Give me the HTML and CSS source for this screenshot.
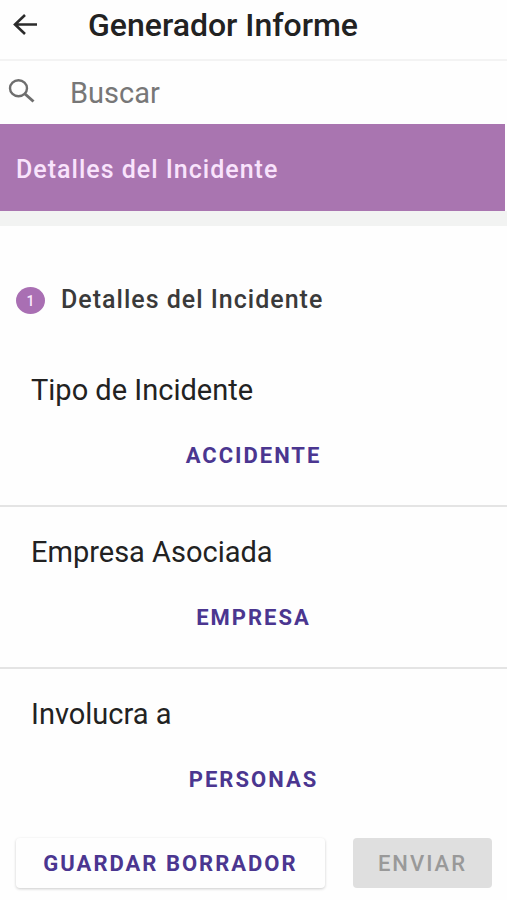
FILE: index.html
```html
<!DOCTYPE html>
<html lang="es">
<head>
	<meta charset="utf-8">
	<meta name="viewport" content="width=device-width, initial-scale=1">
	<title>Generador Informe</title>
	<link rel="stylesheet" href="styles.css">
</head>
<body>
	<header class="topbar">
		<button type="button" class="back" aria-label="Volver">
			<svg width="26" height="24" viewBox="0 0 26 24"><path d="M25 11.500H3M13 2L3 11.500l10 9.500" fill="none" stroke="#2b2b2b" stroke-width="2.600"/></svg>
		</button>
		<h1>Generador Informe</h1>
	</header>

	<form class="search">
		<label for="buscar" aria-label="Buscar">
			<svg width="28" height="28" viewBox="0 0 28 28"><ellipse cx="10.500" cy="9.300" rx="8.500" ry="8" fill="none" stroke="#6e6e6e" stroke-width="2.400"/><path d="M16.500 14.500L25.500 22.500" stroke="#6e6e6e" stroke-width="3"/></svg>
		</label>
		<input type="text" id="buscar" placeholder="Buscar">
	</form>

	<div class="banner">Detalles del Incidente</div>

	<main class="content">
		<div class="step">
			<span class="num">1</span>
			<h2>Detalles del Incidente</h2>
		</div>
		<section class="field">
			<h3>Tipo de Incidente</h3>
			<button type="button" class="btn">ACCIDENTE</button>
		</section>
		<section class="field">
			<h3>Empresa Asociada</h3>
			<button type="button" class="btn">EMPRESA</button>
		</section>
		<section class="field">
			<h3>Involucra a</h3>
			<button type="button" class="btn">PERSONAS</button>
		</section>
	</main>

	<footer class="actions">
		<button type="button" class="btn draft">GUARDAR BORRADOR</button>
		<button type="button" class="btn send" disabled>ENVIAR</button>
	</footer>
</body>
</html>
```
FILE: styles.css
```css
*{box-sizing: border-box;}
body,h1,h2,h3{margin: 0;padding: 0;}
body{
	background-color: #fefefe;
	color: #222;
	font-family: Roboto, "Liberation Sans", sans-serif;
}
button,input{
	font-family: inherit;
	border: 0;
	background: none;
	padding: 0;
}
svg{display: block;}

.topbar{
	display: flex;
	align-items: center;
	height: 61px;
	padding: 0 12px 10px;
	gap: 50px;
	border-bottom: 2px solid #f3f3f3;
}
.back{cursor: pointer;}
.topbar h1{
	font-size: 32px;
	line-height: 36px;
	font-weight: 500;
}

.search{
	display: flex;
	align-items: center;
	height: 63px;
	padding-left: 8px;
	gap: 34px;
}
.search input{
	flex: 1;
	min-width: 0;
	height: 48px;
	font-size: 29px;
	color: #222;
	outline: 0;
}
.search input::placeholder{
	color: #777;
	opacity: 1;
}

.banner{
	margin-right: 2px;
	padding: 30px 16px 25px;
	background-color: #a975b0;
	color: #f9e3fc;
	font-size: 25px;
	line-height: 32px;
	font-weight: 500;
	letter-spacing: 1px;
}

.content{
	border-top: 15px solid #f2f3f2;
	padding-top: 58px;
}
.step{
	display: flex;
	align-items: center;
	height: 32px;
	padding-left: 16px;
	gap: 16px;
	margin-bottom: 29px;
}
.num{
	width: 29px;
	height: 27px;
	border-radius: 50%;
	background-color: #a96fb3;
	color: #fbeafd;
	font-size: 14px;
	line-height: 28px;
	font-weight: 500;
	text-align: center;
}
.step h2{
	font-size: 25px;
	line-height: 32px;
	font-weight: 500;
	letter-spacing: 1px;
	color: #3a3a3a;
}

.field{
	display: flex;
	flex-direction: column;
	padding: 27px 0 26px;
	border-bottom: 2px solid #e4e4e4;
}
.field:last-child{
	border-bottom: 0;
	padding-bottom: 0;
}
.field h3{
	padding-left: 31px;
	font-size: 29px;
	line-height: 36px;
	font-weight: 400;
	margin-bottom: 23px;
}
.btn{
	height: 48px;
	font-size: 22px;
	font-weight: 700;
	letter-spacing: 2px;
	color: #4b3690;
	cursor: pointer;
}

.actions{
	display: flex;
	gap: 28px;
	padding: 35px 15px 12px 16px;
}
.actions .btn{
	height: 50px;
	border-radius: 4px;
}
.draft{
	flex: 309;
	box-shadow: 0 1px 3px rgba(0,0,0,0.2);
}
.actions .send{
	flex: 139;
	background-color: #dfdfdf;
	color: #999;
	font-weight: 500;
	cursor: default;
}
```
